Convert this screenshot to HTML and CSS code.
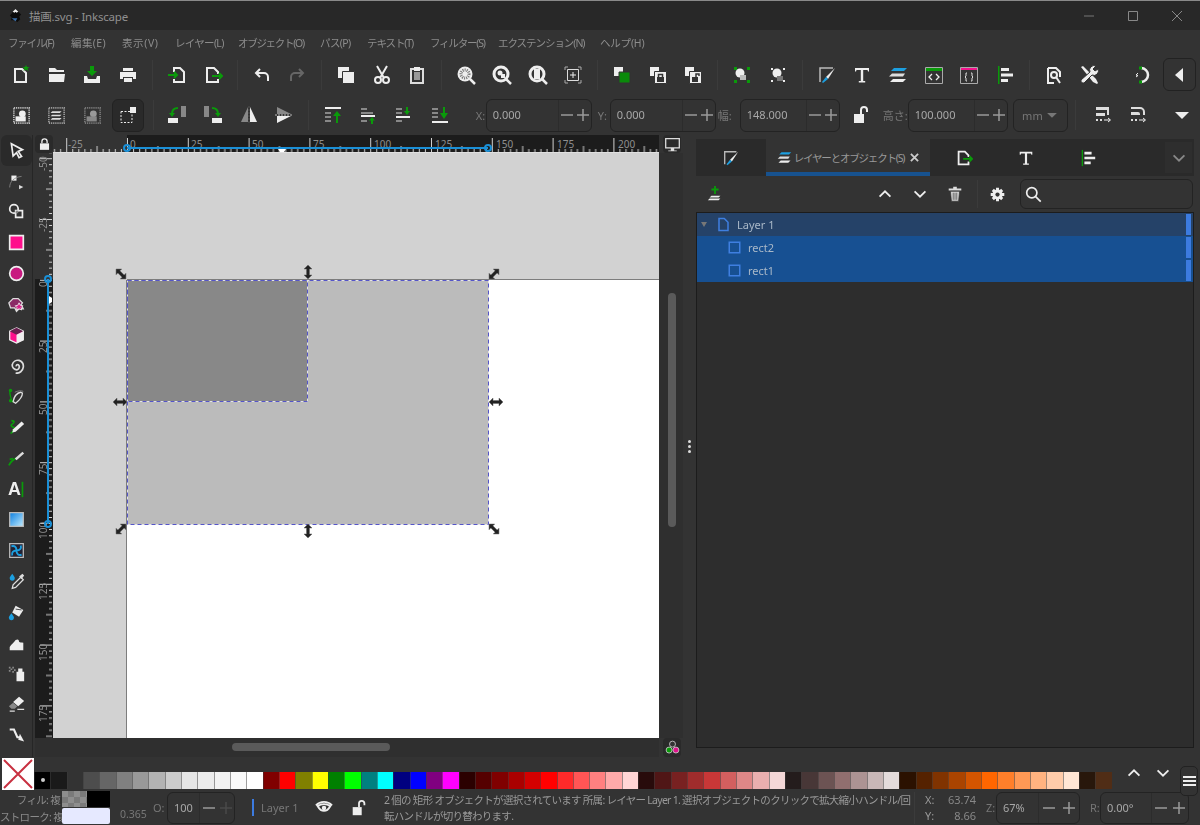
FILE: index.html
```html
<!DOCTYPE html>
<html lang="ja">
<head>
    <meta charset="UTF-8">
    <title>描画.svg - Inkscape</title>
    <link rel="stylesheet" href="styles.css">
</head>
<body>

<!-- icon set -->
<svg class="defs" width="0" height="0">
    <defs>
        <symbol id="i-new" viewBox="0 0 20 20"><path d="M4 4h7l4 4v9H4z" fill="none" stroke="#eee" stroke-width="2"/><path d="M15 0l1 2 2.500 0-2 1.500 1 2.500-2.500-1.500-2.500 1.500 1-2.500-2-1.500 2.500 0z" fill="#0a9a0a"/></symbol>
        <symbol id="i-open" viewBox="0 0 20 20"><path d="M2 3h6l2 2h7v2H5L2 7zM2 9h16l-1 8H2z" fill="#eee"/></symbol>
        <symbol id="i-save" viewBox="0 0 20 20"><path d="M8 1h4v5h3l-5 5-5-5h3z" fill="#0a9a0a"/><path d="M2 11h3l1 3h8l1-3h3v7H2z" fill="#eee"/></symbol>
        <symbol id="i-print" viewBox="0 0 20 20"><path d="M5 3h10v3H5zM2 7h16v7h-3v-2H5v2H2zM6 13h8v4H6z" fill="#eee"/></symbol>
        <symbol id="i-import" viewBox="0 0 20 20"><path d="M7 7V3h6l4 4v10H7v-3" fill="none" stroke="#eee" stroke-width="2"/><path d="M1 10h8M7 7l3 3-3 3" fill="none" stroke="#0a9a0a" stroke-width="2"/></symbol>
        <symbol id="i-export" viewBox="0 0 20 20"><path d="M15 9V7l-4-4H4v14h11v-3" fill="none" stroke="#eee" stroke-width="2"/><path d="M9 11h10M16 8l3 3-3 3" fill="none" stroke="#0a9a0a" stroke-width="2"/></symbol>
        <symbol id="i-undo" viewBox="0 0 20 20"><path d="M8 4L4 8l4 4M4 8h8a4 4 0 0 1 4 4v4" fill="none" stroke="currentColor" stroke-width="2"/></symbol>
        <symbol id="i-redo" viewBox="0 0 20 20"><path d="M12 4l4 4-4 4M16 8H8a4 4 0 0 0-4 4v4" fill="none" stroke="currentColor" stroke-width="2"/></symbol>
        <symbol id="i-copy" viewBox="0 0 20 20"><path d="M2 2h11v11H2z" fill="#eee"/><path d="M6.500 6.500h12v12h-12z" fill="#eee" stroke="#333"/></symbol>
        <symbol id="i-cut" viewBox="0 0 20 20"><path d="M5 1l7 12M15 1L8 13" stroke="#eee" stroke-width="2" fill="none"/><circle cx="6" cy="15" r="3" fill="none" stroke="#eee" stroke-width="2"/><circle cx="14" cy="15" r="3" fill="none" stroke="#eee" stroke-width="2"/></symbol>
        <symbol id="i-paste" viewBox="0 0 20 20"><path d="M4 4h12v14H4z" fill="none" stroke="#ddd" stroke-width="2"/><path d="M7 2h6v4H7z" fill="#eee"/><path d="M7 7h6v8H7z" fill="#999"/></symbol>
        <symbol id="i-zsel" viewBox="0 0 20 20"><circle cx="9" cy="9" r="7.500" fill="#eee"/><circle cx="9" cy="9" r="4" fill="none" stroke="#777" stroke-dasharray="1 1" stroke-width="3"/><path d="M14 14l5 5" stroke="#eee" stroke-width="2.500"/></symbol>
        <symbol id="i-zdraw" viewBox="0 0 20 20"><circle cx="9" cy="9" r="7" fill="none" stroke="#eee" stroke-width="3"/><circle cx="8" cy="8" r="2.500" fill="#eee"/><path d="M9 9h4v4H9z" fill="#eee"/><path d="M14 14l5 5" stroke="#eee" stroke-width="2.500"/></symbol>
        <symbol id="i-zpage" viewBox="0 0 20 20"><circle cx="9" cy="9" r="7" fill="none" stroke="#eee" stroke-width="3"/><path d="M6 4h6v10H6z" fill="#eee"/><path d="M14 14l5 5" stroke="#eee" stroke-width="2.500"/></symbol>
        <symbol id="i-zcenter" viewBox="0 0 20 20"><path d="M2 5V2h3M15 2h3v3M18 15v3h-3M5 18H2v-3" fill="none" stroke="#aaa"/><path d="M4.500 4.500h11v11h-11z" fill="none" stroke="#ddd"/><path d="M7 10h6M10 7v6" stroke="#eee"/></symbol>
        <symbol id="i-group" viewBox="0 0 20 20"><path d="M2 2h9v9H2z" fill="#eee"/><path d="M7 7h11v11H7z" fill="#0a8a0a" stroke="#333"/></symbol>
        <symbol id="i-lockgrp" viewBox="0 0 20 20"><path d="M2 2h9v9H2z" fill="#eee"/><path d="M6.500 6.500h12v12h-12z" fill="#eee" stroke="#333"/><path d="M9 12h7v5H9z" fill="#333"/><path d="M10.500 12V9.500h4V12" fill="none" stroke="#333" stroke-width="1.500"/></symbol>
        <symbol id="i-unlockgrp" viewBox="0 0 20 20"><path d="M2 2h9v9H2z" fill="#eee"/><path d="M6.500 6.500h12v12h-12z" fill="#eee" stroke="#333"/><path d="M9 12h6v5H9z" fill="#333"/><path d="M13 12V9h3v2" fill="none" stroke="#333" stroke-width="1.500"/></symbol>
        <symbol id="i-snapa" viewBox="0 0 20 20"><path d="M2 2h3v3H2zM15 2h3v3h-3zM2 15h3v3H2zM15 15h3v3h-3z" fill="#0a9a0a"/><circle cx="8" cy="8" r="4.500" fill="#eee"/><path d="M8 10h6v5H8z" fill="#bbb"/></symbol>
        <symbol id="i-snapb" viewBox="0 0 20 20"><path d="M3 3h2v2H3zM15 3h2v2h-2zM3 15h2v2H3zM15 15h2v2h-2z" fill="#eee"/><circle cx="9" cy="8" r="4.500" fill="#eee"/><path d="M9 11h6v5H9z" fill="#777"/></symbol>
        <symbol id="i-fill" viewBox="0 0 20 20"><path d="M3 17V3h13" fill="none" stroke="#bbb" stroke-width="1.500"/><path d="M18 3L9 12l2 2z" fill="#eee"/><path d="M9 12l2 2-5 4-1-1z" fill="#1c9fe0"/></symbol>
        <symbol id="i-text" viewBox="0 0 20 20"><path d="M3 3h14v3.500h-1l-.5-1.500H11.200v11h2V17.500H6.800V16h2V5H4.500L4 6.500H3z" fill="#eee"/></symbol>
        <symbol id="i-layers" viewBox="0 0 20 20"><path d="M6 3h13l-3 3H3z" fill="#1c9fe0"/><path d="M4 8.500h13l-2 3H1z" fill="#ddd"/><path d="M5 14h13l-3 3H2z" fill="#eee"/></symbol>
        <symbol id="i-xml" viewBox="0 0 20 20"><path d="M1.500 2.500h17v16h-17z" fill="#333" stroke="#aaa"/><path d="M2 3h16v3H2z" fill="#0a9a0a"/><path d="M8 9l-3 3 3 3M12 9l3 3-3 3" fill="none" stroke="#eee" stroke-width="1.300"/></symbol>
        <symbol id="i-css" viewBox="0 0 20 20"><path d="M1.500 2.500h17v16h-17z" fill="#333" stroke="#aaa"/><path d="M2 3h16v2H2z" fill="#f0148c"/><path d="M8 8H7v3l-1 1 1 1v3h1M12 8h1v3l1 1-1 1v3h-1" fill="none" stroke="#ddd"/></symbol>
        <symbol id="i-align" viewBox="0 0 20 20"><path d="M3 1h1.500v18H3z" fill="#0a9a0a"/><path d="M6 3h8v3H6zM6 8.500h12v3H6zM6 14h7v3H6z" fill="#eee"/></symbol>
        <symbol id="i-docprop" viewBox="0 0 20 20"><path d="M4 3h8l4 4v5M10 18H4V3" fill="none" stroke="#eee" stroke-width="2"/><circle cx="10" cy="10" r="3" fill="none" stroke="#eee" stroke-width="2"/><path d="M12 12l4 6" stroke="#eee" stroke-width="2"/></symbol>
        <symbol id="i-tools" viewBox="0 0 20 20"><path d="M2 2l2-1 13 13 2 4-1 1-4-2z" fill="#eee"/><path d="M17 1a4.500 4.500 0 0 0-6 6L2 15a2.500 2.500 0 0 0 3 3l8-8a4.500 4.500 0 0 0 6-6l-3 2-2-2z" fill="#eee" stroke="#333"/></symbol>
        <symbol id="i-sync" viewBox="0 0 20 20"><path d="M8 3a7 7 0 1 1 0 14" fill="none" stroke="#eee" stroke-width="2.500"/><path d="M6 1.500h3v3H6zM6 15.500h3v3H6z" fill="#0a9a0a"/><path d="M5 8L3 10l2 .5L3 12" fill="none" stroke="#eee"/></symbol>
        <symbol id="i-tri-l" viewBox="0 0 20 20"><path d="M14 3v14L6 10z" fill="#eee"/></symbol>
        <symbol id="i-selall" viewBox="0 0 20 20"><path d="M1 1h18v18H1z" fill="none" stroke="#bbb" stroke-width="2" stroke-dasharray="1.500 1"/><circle cx="11" cy="8" r="4" fill="#eee"/><path d="M3 11h12v6H3z" fill="#eee"/></symbol>
        <symbol id="i-selstack" viewBox="0 0 20 20"><path d="M1 1h18v18H1z" fill="none" stroke="#999" stroke-width="2" stroke-dasharray="1.500 1"/><path d="M5 5h11l-2 2H3zM5 9h11l-2 2H3zM5 13h11l-2 2H3z" fill="#ddd"/></symbol>
        <symbol id="i-seldim" viewBox="0 0 20 20"><path d="M1 1h18v18H1z" fill="none" stroke="#777" stroke-width="2" stroke-dasharray="1.500 1"/><circle cx="11" cy="8" r="4" fill="#999"/><path d="M3 11h12v6H3z" fill="#888"/></symbol>
        <symbol id="i-selbox" viewBox="0 0 20 20"><path d="M3 6.500h11v11H3z" fill="none" stroke="#eee" stroke-dasharray="2 1.500"/><path d="M12 2h6v6h-6z" fill="#eee"/></symbol>
        <symbol id="i-rotl" viewBox="0 0 20 20"><path d="M14 1h5v11h-5z" fill="#888"/><path d="M1 13h10v5H1z" fill="#eee"/><path d="M11 3C7 3 5 5 5 9" fill="none" stroke="#0a9a0a" stroke-width="2"/><path d="M2 8h6l-3 4z" fill="#0a9a0a"/></symbol>
        <symbol id="i-rotr" viewBox="0 0 20 20"><path d="M1 1h5v11H1z" fill="#888"/><path d="M9 13h10v5H9z" fill="#eee"/><path d="M9 3c4 0 6 2 6 6" fill="none" stroke="#0a9a0a" stroke-width="2"/><path d="M12 8h6l-3 4z" fill="#0a9a0a"/></symbol>
        <symbol id="i-fliph" viewBox="0 0 20 20"><path d="M9 2v15H2z" fill="#888"/><path d="M11 2v15h7z" fill="#eee"/><path d="M10 1v18" stroke="#555" stroke-dasharray="2 1"/></symbol>
        <symbol id="i-flipv" viewBox="0 0 20 20"><path d="M3 2l14 7H3z" fill="#888"/><path d="M3 11h14L3 18z" fill="#eee"/><path d="M1 10h18" stroke="#bbb" stroke-dasharray="2 1"/></symbol>
        <symbol id="i-top" viewBox="0 0 20 20"><path d="M2 2h16v2H2z" fill="#eee"/><path d="M2 7h6v2H2zM2 11h6v2H2zM2 15h6v2H2z" fill="#888"/><path d="M14 6l4 5h-3v7h-2v-7h-3z" fill="#0a9a0a"/></symbol>
        <symbol id="i-up" viewBox="0 0 20 20"><path d="M2 3h6v2H2zM2 7h12v2H2z" fill="#888"/><path d="M2 10h14v2H2z" fill="#eee"/><path d="M2 15h6v2H2z" fill="#888"/><path d="M13 12l3 3.500h-2V19h-2v-3.500h-2z" fill="#0a9a0a"/></symbol>
        <symbol id="i-down" viewBox="0 0 20 20"><path d="M2 3h6v2H2zM2 7h6v2H2z" fill="#888"/><path d="M2 11h14v2H2z" fill="#eee"/><path d="M2 15h6v2H2z" fill="#888"/><path d="M12 2h2v4h2l-3 4-3-4h2z" fill="#0a9a0a"/></symbol>
        <symbol id="i-bottom" viewBox="0 0 20 20"><path d="M2 3h6v2H2zM2 7h6v2H2zM2 11h6v2H2z" fill="#888"/><path d="M2 16h16v2H2z" fill="#eee"/><path d="M13 2h2v6h3l-4 6-4-6h3z" fill="#0a9a0a"/></symbol>
        <symbol id="i-minus" viewBox="0 0 14 14"><path d="M1 6.250h12v1.500H1z" fill="currentColor"/></symbol>
        <symbol id="i-plus" viewBox="0 0 14 14"><path d="M1 6.250h12v1.500H1zM6.250 1h1.500v12h-1.500z" fill="currentColor"/></symbol>
        <symbol id="i-lock-open" viewBox="0 0 20 20"><path d="M3 9h10v9H3z" fill="#eee"/><path d="M10 9V5a3 3 0 0 1 6 0v2" fill="none" stroke="#eee" stroke-width="2"/></symbol>
        <symbol id="i-lock" viewBox="0 0 20 20"><path d="M3 9h14v10H3z" fill="#eee"/><path d="M6 9V6a4 4 0 0 1 8 0v3" fill="none" stroke="#eee" stroke-width="2"/></symbol>
        <symbol id="i-opta" viewBox="0 0 20 20"><path d="M2 2h13v3H2z" fill="#ddd" stroke="none"/><path d="M13 5h2v5h-2M2 8h9v3H2zM2 14h2v2H2zM6 14h2v2H6z" fill="#ddd"/><path d="M10 15h6M14 13l2.500 2-2.500 2" fill="none" stroke="#eee"/></symbol>
        <symbol id="i-optb" viewBox="0 0 20 20"><path d="M2 2h9a5 5 0 0 1 5 5v3h-2V7a3 3 0 0 0-3-3H2zM2 7h7a2 2 0 0 1 2 2v1H2z" fill="#ddd"/><path d="M2 14h2v2H2zM6 14h2v2H6z" fill="#ddd"/><path d="M10 15h6M14 13l2.500 2-2.500 2" fill="none" stroke="#eee"/></symbol>
        <symbol id="i-tri-d" viewBox="0 0 20 20"><path d="M3 7h14l-7 7z" fill="currentColor"/></symbol>

        <symbol id="t-select" viewBox="0 0 20 20"><path d="M4 2l13 7-5 2 4 6-3 1.500-3-6-4 4z" fill="none" stroke="#eee" stroke-width="2"/></symbol>
        <symbol id="t-node" viewBox="0 0 20 20"><path d="M4 3h6v6H4z" fill="#eee"/><path d="M2 17c0-7 5-12 14-13" fill="none" stroke="#888"/><path d="M13 14l5 2.500-5 2.500z" fill="#ddd"/></symbol>
        <symbol id="t-builder" viewBox="0 0 20 20"><circle cx="7" cy="7" r="5" fill="none" stroke="#eee" stroke-width="2"/><path d="M9 9h8v8H9z" fill="none" stroke="#eee" stroke-width="2"/><path d="M9 9h3v3H9z" fill="#888"/></symbol>
        <symbol id="t-rect" viewBox="0 0 20 20"><path d="M2 2h16v16H2z" fill="#ff0f8c" stroke="#eee" stroke-width="2"/></symbol>
        <symbol id="t-ellipse" viewBox="0 0 20 20"><circle cx="10" cy="10" r="8" fill="#c81a80" stroke="#eee" stroke-width="2"/></symbol>
        <symbol id="t-star" viewBox="0 0 20 20"><path d="M6 3h6l5 5-1.500 2L18 15l-5 0-3 3-2-4H3L1 8z" fill="#8a2a66" stroke="#ddd" stroke-width="1.500"/><path d="M13 8l1.500 3 3 .5-2 2 .5 3-3-1.500-3 1.500.5-3-2-2 3-.5z" fill="#d81f88" stroke="#eee"/></symbol>
        <symbol id="t-box" viewBox="0 0 20 20"><path d="M10 1l8 4v10l-8 4-8-4V5z" fill="#ff0f8c" stroke="#eee" stroke-width="1.500"/><path d="M2 5l8 4 8-4-8-4z" fill="#6a2050"/><path d="M10 9v10l8-4V5z" fill="#eee"/></symbol>
        <symbol id="t-spiral" viewBox="0 0 20 20"><path d="M10 11a1.500 1.500 0 0 1 2-2 3.500 3.500 0 0 1-1 6 5.500 5.500 0 0 1-6-6 7 7 0 0 1 8-5 7.500 7.500 0 0 1 5 8 8 8 0 0 1-9 7" fill="none" stroke="#ddd" stroke-width="2"/></symbol>
        <symbol id="t-pen" viewBox="0 0 20 20"><path d="M2 2c0 6 2 12 4 15" fill="none" stroke="#0a9a0a" stroke-width="1.500"/><circle cx="3" cy="3" r="2" fill="#0a9a0a"/><circle cx="3" cy="15" r="2" fill="#0a9a0a"/><path d="M17 6c0 4-3 8-8 12l-3-2c1-5 4-10 9-11z" fill="none" stroke="#ddd" stroke-width="1.500"/><path d="M8 5c4-2 8-2 10-1" fill="none" stroke="#888"/></symbol>
        <symbol id="t-pencil" viewBox="0 0 20 20"><path d="M4 2c4 0 4 2 1 4s0 3 2 4-2 6-4 7" fill="none" stroke="#0a9a0a" stroke-width="2"/><path d="M16 3l3 3-10 9-4 1 1-4z" fill="#eee"/></symbol>
        <symbol id="t-calli" viewBox="0 0 20 20"><path d="M1 18C3 14 6 11 11 9" fill="none" stroke="#0a9a0a" stroke-width="2"/><path d="M2 11l4-1" stroke="#0a9a0a" stroke-width="2"/><path d="M17 2l2 2-9 8-2-2z" fill="#ddd"/></symbol>
        <symbol id="t-a" viewBox="0 0 20 20"><text class="glyph" x="0" y="16">A</text><path d="M16 1h2v18h-2z" fill="#0a9a0a"/></symbol>
        <linearGradient id="g-blue" x1="0" y1="0" x2="1" y2="1"><stop offset="0" stop-color="#0c7fe0"/><stop offset="1" stop-color="#c0ecff"/></linearGradient>
        <symbol id="t-grad" viewBox="0 0 20 20"><path d="M2 2h16v16H2z" fill="url(#g-blue)" stroke="#bbb" stroke-width="1.500"/></symbol>
        <symbol id="t-mesh" viewBox="0 0 20 20"><path d="M2 2h16v16H2z" fill="#223" stroke="#bbb" stroke-width="1.500"/><path d="M10 10C10 6 8 4 4 5M10 10c4 0 6-2 5-6M10 10c0 4 2 6 6 5M10 10c-4 0-6 2-5 6" fill="none" stroke="#1c9fe0" stroke-width="2.200"/></symbol>
        <symbol id="t-dropper" viewBox="0 0 20 20"><path d="M5 1c2 3 3 4 3 5a3 3 0 0 1-6 0c0-1 1-2 3-5z" fill="#1c9fe0"/><path d="M15 5l-9 9-1 4 4-1 9-9z" fill="#333" stroke="#ddd" stroke-width="1.500"/><path d="M13 4l4-3 2 2-3 4z" fill="#ddd"/></symbol>
        <symbol id="t-bucket" viewBox="0 0 20 20"><path d="M9 2l9 5-5 8-8-5z" fill="#eee"/><path d="M9 6l7 1" stroke="#333"/><path d="M4 11c2 3 3 4 3 5a3 3 0 0 1-6 0c0-1 1-2 3-5z" fill="#1c9fe0"/></symbol>
        <symbol id="t-tweak" viewBox="0 0 20 20"><path d="M2 18v-4c2-3 5-5 7-8 3-2 4 0 4 2 1 1 3 1 5 1v9z" fill="#eee"/></symbol>
        <symbol id="t-spray" viewBox="0 0 20 20"><path d="M10 8h9v11H10zM12 4h5v4h-5z" fill="#eee"/><path d="M1 2h2v2H1zM5 2h2v2H5zM3 4h2v2H3zM7 5h2v2H7zM1 6h2v2H1zM5 7h2v2H5z" fill="#888"/></symbol>
        <symbol id="t-eraser" viewBox="0 0 20 20"><path d="M13 1l6 5-7 6-6-5z" fill="#eee"/><path d="M6 8l5 4-3 3H4l-3-3z" fill="#888"/><path d="M11 15h8v1.500h-8zM2 17h6v1.500H2z" fill="#ddd"/></symbol>
        <symbol id="t-conn" viewBox="0 0 20 20"><path d="M2 3h5l4 9h4" fill="none" stroke="#eee" stroke-width="2.500"/><path d="M14 8l5 9-7-2z" fill="#eee"/></symbol>

        <symbol id="d-display" viewBox="0 0 20 20"><path d="M2 3h16v11H2z" fill="none" stroke="#ddd" stroke-width="1.500"/><path d="M8 14h4v3H8zM5 17h10v1H5z" fill="#ddd"/></symbol>
        <symbol id="d-color" viewBox="0 0 20 20"><circle cx="10" cy="6" r="3.500" fill="#333" stroke="#ccc"/><circle cx="6" cy="13" r="3.500" fill="#0a9a0a" stroke="#ccc"/><circle cx="14" cy="13" r="3.500" fill="#e0148c" stroke="#ccc"/></symbol>
        <symbol id="d-addlayer" viewBox="0 0 20 20"><path d="M9 1h2v3h3v2h-3v4H9V6H6V4h3z" fill="#0a9a0a"/><path d="M6 12h10l-2 2H4zM4 15h12l-2 2H2z" fill="#eee"/></symbol>
        <symbol id="d-up" viewBox="0 0 20 20"><path d="M4 13l6-6 6 6" fill="none" stroke="#eee" stroke-width="2"/></symbol>
        <symbol id="d-down" viewBox="0 0 20 20"><path d="M4 7l6 6 6-6" fill="none" stroke="currentColor" stroke-width="2"/></symbol>
        <symbol id="d-trash" viewBox="0 0 20 20"><path d="M3 4h14v2H3zM8 2h4v2H8z" fill="#ddd"/><path d="M5 7h10l-1 11H6zM8 8.500v8M10 8.500v8M12 8.500v8" fill="#ddd" stroke="#333" stroke-width=".8"/></symbol>
        <symbol id="d-gear" viewBox="0 0 20 20"><path d="M10 2v16M2 10h16M4.500 4.500l11 11M15.500 4.500l-11 11" stroke="#eee" stroke-width="3.500"/><circle cx="10" cy="10" r="6" fill="#eee"/><circle cx="10" cy="10" r="2.500" fill="#333"/></symbol>
        <symbol id="d-search" viewBox="0 0 20 20"><circle cx="8" cy="8" r="6" fill="none" stroke="#eee" stroke-width="2"/><path d="M12.500 12.500l6 6" stroke="#eee" stroke-width="2"/></symbol>
        <symbol id="d-layer" viewBox="0 0 20 20"><path d="M4 2h7l5 5v11H4z" fill="none" stroke="#3f7fe0" stroke-width="2"/></symbol>
        <symbol id="d-rect" viewBox="0 0 20 20"><path d="M3 3h14v14H3z" fill="none" stroke="#3f7fe0" stroke-width="2"/></symbol>
        <symbol id="d-eye" viewBox="0 0 20 20"><path d="M1 7c5-5 13-5 18 0M3 8c4 7 10 7 14 0-4-3-10-3-14 0z" fill="none" stroke="#eee" stroke-width="2"/><circle cx="10" cy="10" r="2.500" fill="#eee"/></symbol>
    </defs>
</svg>

<div class="window">

    <!-- title bar -->
    <div class="titlebar">
        <svg class="logo" viewBox="0 0 16 16"><path d="M8 1l6 6-2 2 1 3-3 3-3-2-4 0 1-3-2-2z" fill="#0b0b0b"/><path d="M8 1L5 4l2 1 1-1 1 1 2-1z" fill="#eee"/><path d="M4 11h6l-2 3z" fill="#3a6ea8"/></svg>
        <span class="title-text">描画.svg - Inkscape</span>
        <div class="winctl">
            <svg viewBox="0 0 12 12"><path d="M1 6h10" stroke="#777"/></svg>
            <svg viewBox="0 0 12 12"><path d="M1.500 1.500h9v9h-9z" fill="none" stroke="#888"/></svg>
            <svg viewBox="0 0 12 12"><path d="M1 1l10 10M11 1L1 11" stroke="#888"/></svg>
        </div>
    </div>

    <!-- menu bar -->
    <div class="menubar">
        <span class="m1">ファイル(F)</span>
        <span class="m2">編集(E)</span>
        <span class="m3">表示(V)</span>
        <span class="m4">レイヤー(L)</span>
        <span class="m5">オブジェクト(O)</span>
        <span class="m6">パス(P)</span>
        <span class="m7">テキスト(T)</span>
        <span class="m8">フィルター(S)</span>
        <span class="m9">エクステンション(N)</span>
        <span class="m10">ヘルプ(H)</span>
    </div>

    <!-- command bar -->
    <div class="toolbar top">
        <svg class="ic"><use href="#i-new"/></svg>
        <svg class="ic"><use href="#i-open"/></svg>
        <svg class="ic"><use href="#i-save"/></svg>
        <svg class="ic"><use href="#i-print"/></svg>
        <i class="sep"></i>
        <svg class="ic"><use href="#i-import"/></svg>
        <svg class="ic"><use href="#i-export"/></svg>
        <i class="sep"></i>
        <svg class="ic lit"><use href="#i-undo"/></svg>
        <svg class="ic dim"><use href="#i-redo"/></svg>
        <i class="sep"></i>
        <svg class="ic"><use href="#i-copy"/></svg>
        <svg class="ic"><use href="#i-cut"/></svg>
        <svg class="ic"><use href="#i-paste"/></svg>
        <i class="sep"></i>
        <svg class="ic"><use href="#i-zsel"/></svg>
        <svg class="ic"><use href="#i-zdraw"/></svg>
        <svg class="ic"><use href="#i-zpage"/></svg>
        <svg class="ic"><use href="#i-zcenter"/></svg>
        <i class="sep"></i>
        <svg class="ic"><use href="#i-group"/></svg>
        <svg class="ic"><use href="#i-lockgrp"/></svg>
        <svg class="ic"><use href="#i-unlockgrp"/></svg>
        <i class="sep"></i>
        <svg class="ic"><use href="#i-snapa"/></svg>
        <svg class="ic"><use href="#i-snapb"/></svg>
        <i class="sep"></i>
        <svg class="ic"><use href="#i-fill"/></svg>
        <svg class="ic"><use href="#i-text"/></svg>
        <svg class="ic"><use href="#i-layers"/></svg>
        <svg class="ic"><use href="#i-xml"/></svg>
        <svg class="ic"><use href="#i-css"/></svg>
        <svg class="ic"><use href="#i-align"/></svg>
        <i class="sep"></i>
        <svg class="ic"><use href="#i-docprop"/></svg>
        <svg class="ic"><use href="#i-tools"/></svg>
        <svg class="ic sync"><use href="#i-sync"/></svg>
        <span class="more-btn"><svg class="ic-sm"><use href="#i-tri-l"/></svg></span>
    </div>

    <!-- tool controls -->
    <div class="toolbar controls">
        <svg class="ic small"><use href="#i-selall"/></svg>
        <svg class="ic small"><use href="#i-selstack"/></svg>
        <svg class="ic small"><use href="#i-seldim"/></svg>
        <span class="active-btn"><svg class="ic-sm"><use href="#i-selbox"/></svg></span>
        <i class="sep"></i>
        <svg class="ic"><use href="#i-rotl"/></svg>
        <svg class="ic"><use href="#i-rotr"/></svg>
        <svg class="ic"><use href="#i-fliph"/></svg>
        <svg class="ic"><use href="#i-flipv"/></svg>
        <i class="sep"></i>
        <svg class="ic"><use href="#i-top"/></svg>
        <svg class="ic"><use href="#i-up"/></svg>
        <svg class="ic"><use href="#i-down"/></svg>
        <svg class="ic"><use href="#i-bottom"/></svg>
        <span class="lbl lbl-x">X:</span>
        <div class="spin w106"><span class="val">0.000</span><span class="btn"><svg><use href="#i-minus"/></svg></span><span class="btn"><svg><use href="#i-plus"/></svg></span></div>
        <span class="lbl lbl-y">Y:</span>
        <div class="spin w106"><span class="val">0.000</span><span class="btn"><svg><use href="#i-minus"/></svg></span><span class="btn"><svg><use href="#i-plus"/></svg></span></div>
        <span class="lbl lbl-w">幅:</span>
        <div class="spin w100"><span class="val">148.000</span><span class="btn"><svg><use href="#i-minus"/></svg></span><span class="btn"><svg><use href="#i-plus"/></svg></span></div>
        <svg class="ic-lock"><use href="#i-lock-open"/></svg>
        <span class="lbl lbl-h">高さ:</span>
        <div class="spin w100"><span class="val">100.000</span><span class="btn"><svg><use href="#i-minus"/></svg></span><span class="btn"><svg><use href="#i-plus"/></svg></span></div>
        <div class="unit">mm<svg><use href="#i-tri-d"/></svg></div>
        <i class="sep sep-unit"></i>
        <svg class="ic"><use href="#i-opta"/></svg>
        <svg class="ic"><use href="#i-optb"/></svg>
        <svg class="ic lit drop"><use href="#i-tri-d"/></svg>
    </div>

    <div class="main">

        <!-- toolbox -->
        <div class="toolbox">
            <span class="tool active"><svg><use href="#t-select"/></svg></span>
            <span class="tool"><svg><use href="#t-node"/></svg></span>
            <span class="tool"><svg><use href="#t-builder"/></svg></span>
            <span class="tool"><svg><use href="#t-rect"/></svg></span>
            <span class="tool"><svg><use href="#t-ellipse"/></svg></span>
            <span class="tool"><svg><use href="#t-star"/></svg></span>
            <span class="tool"><svg><use href="#t-box"/></svg></span>
            <span class="tool"><svg><use href="#t-spiral"/></svg></span>
            <span class="tool"><svg><use href="#t-pen"/></svg></span>
            <span class="tool"><svg><use href="#t-pencil"/></svg></span>
            <span class="tool"><svg><use href="#t-calli"/></svg></span>
            <span class="tool"><svg><use href="#t-a"/></svg></span>
            <span class="tool"><svg><use href="#t-grad"/></svg></span>
            <span class="tool"><svg><use href="#t-mesh"/></svg></span>
            <span class="tool"><svg><use href="#t-dropper"/></svg></span>
            <span class="tool"><svg><use href="#t-bucket"/></svg></span>
            <span class="tool"><svg><use href="#t-tweak"/></svg></span>
            <span class="tool"><svg><use href="#t-spray"/></svg></span>
            <span class="tool"><svg><use href="#t-eraser"/></svg></span>
            <span class="tool"><svg><use href="#t-conn"/></svg></span>
        </div>

        <!-- canvas with rulers -->
        <div class="workspace">
            <span class="corner"><svg><use href="#i-lock"/></svg></span>
            <svg class="ruler-top" width="606" height="18">
                <defs>
                    <pattern id="ticks-h" patternUnits="userSpaceOnUse" x="74" y="0" width="60.800" height="18">
                        <path d="M0.500 3v14M6.580 14v3M12.660 14v3M18.740 14v3M24.820 14v3M30.900 11v6M36.980 14v3M43.060 14v3M49.140 14v3M55.220 14v3" stroke="#d0d0d0"/>
                    </pattern>
                </defs>
                <rect width="74" height="18" fill="#333"/>
                <rect x="74" width="532" height="18" fill="#1c1c1c"/>
                <rect width="606" height="18" fill="url(#ticks-h)"/>
                <rect y="17" width="606" height="1" fill="#e0e0e0"/>
                <text x="15" y="13">-25</text><text x="77" y="13">0</text><text x="138" y="13">25</text><text x="199" y="13">50</text><text x="260" y="13">75</text><text x="321" y="13">100</text><text x="382" y="13">125</text><text x="443" y="13">150</text><text x="504" y="13">175</text><text x="565" y="13">200</text>
                <path d="M74 13h361" stroke="#1a8fd6" stroke-width="2"/>
                <circle cx="74" cy="13" r="3" fill="none" stroke="#1a8fd6" stroke-width="2"/>
                <circle cx="435" cy="13" r="3" fill="none" stroke="#1a8fd6" stroke-width="2"/>
                <path d="M225 14h8l-2 3h-4z" fill="#fff"/>
            </svg>
            <span class="display-btn"><svg><use href="#d-display"/></svg></span>

            <svg class="ruler-left" width="18" height="585">
                <defs>
                    <pattern id="ticks-v" patternUnits="userSpaceOnUse" x="0" y="5.200" width="18" height="60.800">
                        <path d="M5 0.500h12M14 6.580h3M14 12.660h3M14 18.740h3M14 24.820h3M11 30.900h6M14 36.980h3M14 43.060h3M14 49.140h3M14 55.220h3" stroke="#d0d0d0"/>
                    </pattern>
                </defs>
                <rect width="18" height="126" fill="#333"/>
                <rect y="126" width="18" height="459" fill="#1c1c1c"/>
                <rect width="18" height="585" fill="url(#ticks-v)"/>
                <text transform="translate(12 18) rotate(-90)">-50</text><text transform="translate(12 79) rotate(-90)">-25</text><text transform="translate(12 134) rotate(-90)">0</text><text transform="translate(12 200) rotate(-90)">25</text><text transform="translate(12 262) rotate(-90)">50</text><text transform="translate(12 322) rotate(-90)">75</text><text transform="translate(12 386) rotate(-90)">100</text><text transform="translate(12 447) rotate(-90)">125</text><text transform="translate(12 508) rotate(-90)">150</text><text transform="translate(12 569) rotate(-90)">175</text>
                <path d="M13 126v245" stroke="#1a8fd6" stroke-width="2"/>
                <circle cx="13" cy="126" r="3" fill="none" stroke="#1a8fd6" stroke-width="2"/>
                <circle cx="13" cy="371" r="3" fill="none" stroke="#1a8fd6" stroke-width="2"/>
                <path d="M14 143v8l3-2v-4z" fill="#fff"/>
            </svg>

            <svg class="canvas" width="606" height="585">
                <defs>
                    <path id="h-arrow" d="M-7 0l4-4v2.500h6V-4l4 4-4 4V1.500H-3V4z" fill="#222" stroke="#666" stroke-width=".5"/>
                </defs>
                <rect width="606" height="585" fill="#d2d2d2"/>
                <rect x="74" y="127" width="532" height="458" fill="#fff"/>
                <path d="M73.500 127v458M74 126.500h532" stroke="#7d7d7d"/>
                <rect x="74" y="127" width="361" height="244" fill="#bbb"/>
                <rect x="74" y="127" width="180" height="121" fill="#888"/>
                <g fill="none">
                    <rect x="74.500" y="127.500" width="361" height="244" stroke="#e4e4e4"/>
                    <rect x="74.500" y="127.500" width="180" height="121" stroke="#e4e4e4"/>
                    <rect x="74.500" y="127.500" width="361" height="244" stroke="#5555c8" stroke-dasharray="4 3"/>
                    <rect x="74.500" y="127.500" width="180" height="121" stroke="#5555c8" stroke-dasharray="4 3"/>
                </g>
                <use href="#h-arrow" transform="translate(68 121) rotate(45)"/>
                <use href="#h-arrow" transform="translate(255 119) rotate(90)"/>
                <use href="#h-arrow" transform="translate(441 121) rotate(-45)"/>
                <use href="#h-arrow" transform="translate(67 249)"/>
                <use href="#h-arrow" transform="translate(443 249)"/>
                <use href="#h-arrow" transform="translate(68 376) rotate(-45)"/>
                <use href="#h-arrow" transform="translate(255 378) rotate(90)"/>
                <use href="#h-arrow" transform="translate(441 376) rotate(45)"/>
            </svg>
            <div class="vscroll"><span class="thumb-v"></span></div>

            <div class="hscroll"><span class="thumb-h"></span></div>
            <span class="color-btn"><svg><use href="#d-color"/></svg></span>
        </div>

        <div class="handle"><i></i><i></i><i></i></div>

        <!-- docked dialogs -->
        <div class="dock">
            <div class="tabs">
                <span class="tab t-fill"><svg class="ic-tab"><use href="#i-fill"/></svg></span>
                <span class="tab active"><svg class="ic-tab"><use href="#i-layers"/></svg><span class="tab-label">レイヤーとオブジェクト(S)</span><svg class="tab-x" viewBox="0 0 10 10"><path d="M1 1l8 8M9 1L1 9" stroke="#ccc" stroke-width="2"/></svg></span>
                <span class="tab t-rest"><svg class="ic-tab"><use href="#i-export"/></svg></span>
                <span class="tab t-rest"><svg class="ic-tab"><use href="#i-text"/></svg></span>
                <span class="tab t-rest"><svg class="ic-tab"><use href="#i-align"/></svg></span>
                <span class="tab-menu"><svg><use href="#d-down"/></svg></span>
            </div>
            <div class="dock-bar">
                <svg class="add-layer"><use href="#d-addlayer"/></svg>
                <svg class="db-ic"><use href="#d-up"/></svg>
                <svg class="db-ic"><use href="#d-down"/></svg>
                <svg class="db-ic"><use href="#d-trash"/></svg>
                <i class="sep"></i>
                <svg class="db-ic gear"><use href="#d-gear"/></svg>
                <div class="search"><svg><use href="#d-search"/></svg></div>
            </div>
            <div class="tree">
                <div class="row layer"><i class="expander"></i><svg class="row-ic"><use href="#d-layer"/></svg><span>Layer 1</span><b></b></div>
                <div class="row child"><svg class="row-ic"><use href="#d-rect"/></svg><span>rect2</span><b></b></div>
                <div class="row child"><svg class="row-ic"><use href="#d-rect"/></svg><span>rect1</span><b></b></div>
            </div>
        </div>
    </div>

    <!-- palette -->
    <div class="palette">
        <svg class="nofill" viewBox="0 0 32 32"><rect width="32" height="32" fill="#fff"/><path d="M2 2l28 28M30 2L2 30" stroke="#c83040" stroke-width="2"/></svg>
        <div class="swatches">
            <span class="sw dot" style="background:#000"></span><span class="sw" style="background:#1a1a1a"></span><span class="sw" style="background:#333"></span><span class="sw" style="background:#4d4d4d"></span><span class="sw" style="background:#666"></span><span class="sw" style="background:#808080"></span><span class="sw" style="background:#999"></span><span class="sw" style="background:#b3b3b3"></span><span class="sw" style="background:#ccc"></span><span class="sw" style="background:#e6e6e6"></span><span class="sw" style="background:#ececec"></span><span class="sw" style="background:#f2f2f2"></span><span class="sw" style="background:#f9f9f9"></span><span class="sw" style="background:#fff"></span>
            <span class="sw" style="background:#800000"></span><span class="sw" style="background:#f00"></span><span class="sw" style="background:#808000"></span><span class="sw" style="background:#ff0"></span><span class="sw" style="background:#008000"></span><span class="sw" style="background:#0f0"></span><span class="sw" style="background:#008080"></span><span class="sw" style="background:#0ff"></span><span class="sw" style="background:#000080"></span><span class="sw" style="background:#00f"></span><span class="sw" style="background:#800080"></span><span class="sw" style="background:#f0f"></span>
            <span class="sw" style="background:#2b0000"></span><span class="sw" style="background:#500"></span><span class="sw" style="background:#800000"></span><span class="sw" style="background:#a00"></span><span class="sw" style="background:#d40000"></span><span class="sw" style="background:#f00"></span><span class="sw" style="background:#ff2a2a"></span><span class="sw" style="background:#f55"></span><span class="sw" style="background:#ff8080"></span><span class="sw" style="background:#faa"></span><span class="sw" style="background:#ffd5d5"></span>
            <span class="sw" style="background:#280b0b"></span><span class="sw" style="background:#501616"></span><span class="sw" style="background:#782121"></span><span class="sw" style="background:#a02c2c"></span><span class="sw" style="background:#c83737"></span><span class="sw" style="background:#d35f5f"></span><span class="sw" style="background:#de8787"></span><span class="sw" style="background:#e9afaf"></span><span class="sw" style="background:#f4d7d7"></span>
            <span class="sw" style="background:#241c1c"></span><span class="sw" style="background:#483737"></span><span class="sw" style="background:#6c5353"></span><span class="sw" style="background:#916f6f"></span><span class="sw" style="background:#ac9393"></span><span class="sw" style="background:#c8b7b7"></span><span class="sw" style="background:#e3dbdb"></span>
            <span class="sw" style="background:#2b1100"></span><span class="sw" style="background:#520"></span><span class="sw" style="background:#803300"></span><span class="sw" style="background:#a40"></span><span class="sw" style="background:#d45500"></span><span class="sw" style="background:#f60"></span><span class="sw" style="background:#ff7f2a"></span><span class="sw" style="background:#f95"></span><span class="sw" style="background:#ffb380"></span><span class="sw" style="background:#fca"></span><span class="sw" style="background:#ffe6d5"></span>
            <span class="sw" style="background:#28170b"></span><span class="sw" style="background:#502d16"></span>
        </div>
        <svg class="pal-ch up"><use href="#d-up"/></svg>
        <svg class="pal-ch lit"><use href="#d-down"/></svg>
        <span class="pal-menu"><i></i><i></i><i></i></span>
    </div>

    <!-- status bar -->
    <div class="statusbar">
        <div class="fs">
            <span class="fs-label">フィル: 複</span><span class="fs-fill"><i class="checker"></i><i class="black"></i></span>
            <span class="fs-label">ストローク: 複</span><span class="fs-stroke"></span>
        </div>
        <span class="stroke-w">0.365</span>
        <span class="lbl lbl-o">O:</span>
        <div class="spin w68"><span class="val">100</span><span class="btn"><svg><use href="#i-minus"/></svg></span><span class="btn off"><svg><use href="#i-plus"/></svg></span></div>
        <i class="layer-bar"></i>
        <span class="layer-name">Layer 1</span>
        <svg class="st-eye"><use href="#d-eye"/></svg>
        <svg class="st-lock"><use href="#i-lock-open"/></svg>
        <p class="msg">2 個の 矩形 オブジェクトが選択されています 所属: レイヤー Layer 1. 選択オブジェクトのクリックで拡大縮小ハンドル/回<br>転ハンドルが切り替わります.</p>
        <div class="coords"><span>X:</span><span class="num">63.74</span><span>Y:</span><span class="num">8.66</span></div>
        <span class="lbl lbl-z">Z:</span>
        <div class="spin w84"><span class="val">67%</span><span class="btn"><svg><use href="#i-minus"/></svg></span><span class="btn"><svg><use href="#i-plus"/></svg></span></div>
        <span class="lbl lbl-r">R:</span>
        <div class="spin w90"><span class="val">0.00°</span><span class="btn"><svg><use href="#i-minus"/></svg></span><span class="btn"><svg><use href="#i-plus"/></svg></span></div>
    </div>
</div>

</body>
</html>
```

FILE: styles.css
```css
* {
    box-sizing: border-box;
}
html, body {
    margin: 0;
    padding: 0;
    width: 1200px;
    height: 825px;
    overflow: hidden;
    background-color: #333;
}
body {
    font-family: "Noto Sans", "Noto Sans CJK JP", sans-serif;
    font-size: 11px;
    color: #a0a0a0;
}
svg {
    display: block;
    flex-shrink: 0;
}
.defs {
    position: absolute;
}
.glyph {
    font-family: "Liberation Sans", sans-serif;
    font-size: 21px;
    font-weight: bold;
    fill: #eee;
}
.window {
    width: 1200px;
    height: 825px;
    display: flex;
    flex-direction: column;
    filter: blur(0.35px);
}

/* title + menu */
.titlebar {
    height: 30px;
    display: flex;
    align-items: center;
    padding-left: 8px;
    background-color: #282828;
    border-top: 1px solid #8a8a8a;
    font-size: 11.5px;
}
.logo {
    width: 15px;
    height: 15px;
}
.title-text {
    margin-left: 6px;
    color: #909090;
    letter-spacing: -0.2px;
}
.winctl {
    margin-left: auto;
    display: flex;
    padding-right: 17px;
    gap: 32px;
}
.winctl svg {
    width: 12px;
    height: 12px;
}
.menubar {
    height: 24px;
    display: flex;
    align-items: center;
    padding-left: 8px;
    font-size: 10.5px;
    color: #8c8c8c;
    white-space: nowrap;
}
.m1 { width: 63px; letter-spacing: -1.2px; }
.m2 { width: 51px; letter-spacing: 0.4px; }
.m3 { width: 53px; letter-spacing: 0.6px; }
.m4 { width: 63px; letter-spacing: -0.7px; }
.m5 { width: 82px; letter-spacing: -1.3px; }
.m6 { width: 47px; letter-spacing: -0.6px; }
.m7 { width: 63px; letter-spacing: -1.1px; }
.m8 { width: 68px; letter-spacing: -1.2px; }
.m9 { width: 102px; letter-spacing: -1.05px; }
.m10 { letter-spacing: -0.2px; }

/* toolbars */
.toolbar {
    display: flex;
    align-items: center;
    padding-left: 3.500px;
}
.toolbar.top {
    height: 41px;
}
.toolbar.controls {
    height: 40px;
}
.ic {
    width: 20px;
    height: 20px;
    margin: 0 7.800px;
    color: #eee;
}
.ic.small {
    width: 17px;
    height: 17px;
    margin: 0 9.300px;
}
.ic.dim {
    color: #666;
}
.ic.sync {
    margin-left: 26px;
}
.ic.drop {
    margin-left: 15px;
    width: 20px;
}
.sep {
    width: 1px;
    height: 30px;
    margin: 0 6.200px;
    background-color: #3b3b3b;
}
.sep-unit {
    margin: 0 10px 0 7px;
}
.more-btn, .active-btn {
    display: flex;
    align-items: center;
    justify-content: center;
    border: 1px solid #222;
    border-radius: 6px;
    height: 33px;
    width: 33px;
}
.more-btn {
    margin-left: 2px;
}
.active-btn {
    background-color: #2a2a2a;
    margin: 0 2px 0 2px;
}
.ic-sm {
    width: 20px;
    height: 20px;
}
.lbl {
    color: #777;
    font-size: 11px;
    flex-shrink: 0;
}
.lbl-x {
    width: 34px;
    padding-left: 24px;
    margin-left: -6px;
}
.lbl-y {
    width: 18px;
    padding-left: 6px;
}
.lbl-w {
    width: 24px;
    padding-left: 2px;
}
.lbl-h {
    width: 25px;
}
.spin {
    height: 33px;
    display: flex;
    align-items: center;
    flex-shrink: 0;
    border: 1px solid #232323;
    border-radius: 6px;
    color: #a8a8a8;
    font-size: 11px;
}
.spin .val {
    flex: 1;
    padding-left: 6px;
    height: 100%;
    line-height: 30px;
    border-right: 1px solid #2c2c2c;
}
.spin .btn {
    width: 16px;
    height: 100%;
    display: flex;
    align-items: center;
    justify-content: center;
    color: #9a9a9a;
}
.spin .btn.off {
    color: #4a4a4a;
}
.spin .btn svg {
    width: 14px;
    height: 14px;
}
.w106 { width: 106px; }
.w100 { width: 100px; }
.w68 { width: 68px; }
.w84 { width: 84px; }
.w90 { width: 89px; }
.ic-lock {
    width: 20px;
    height: 20px;
    margin: 0 12px 0 11px;
}
.unit {
    width: 57px;
    height: 33px;
    margin-left: 5px;
    display: flex;
    align-items: center;
    justify-content: center;
    gap: 2px;
    border: 1px solid #232323;
    border-radius: 6px;
    color: #777;
}
.unit svg {
    width: 14px;
    height: 14px;
    color: #777;
}

/* main area */
.main {
    height: 622px;
    display: flex;
}
.toolbox {
    width: 33px;
    display: flex;
    flex-direction: column;
    border-right: 1px solid #262626;
    padding-left: 1px;
}
.tool {
    height: 30.800px;
    width: 31px;
    display: flex;
    align-items: center;
    justify-content: center;
    flex-shrink: 0;
}
.tool.active {
    background-color: #2a2a2a;
    border-radius: 6px;
}
.tool svg {
    width: 17px;
    height: 17px;
}
.workspace {
    margin-left: 2px;
    width: 648px;
    display: grid;
    grid-template-columns: 18px 606px 24px;
    grid-template-rows: 18px 585px 19px;
}
.corner {
    display: flex;
    align-items: center;
    justify-content: center;
    background-color: #2a2a2a;
    border-radius: 4px;
}
.corner svg {
    width: 13px;
    height: 14px;
}
.ruler-top text, .ruler-left text {
    font-size: 10px;
    fill: #8f8f8f;
}
.display-btn, .color-btn {
    display: flex;
    align-items: center;
    justify-content: center;
    border-radius: 4px;
    background-color: #2a2a2a;
    margin-left: 4px;
    width: 18px;
}
.display-btn svg, .color-btn svg {
    width: 17px;
    height: 17px;
}
.vscroll {
    background-color: #2f2f2f;
    padding: 140px 0 0 9px;
}
.thumb-v {
    display: block;
    width: 8px;
    height: 234px;
    border-radius: 4px;
    background-color: #5a5a5a;
}
.hscroll {
    grid-column: 1 / 3;
    background-color: #2f2f2f;
    padding: 5px 0 0 197px;
}
.thumb-h {
    display: block;
    width: 158px;
    height: 8px;
    border-radius: 4px;
    background-color: #5a5a5a;
}
.handle {
    width: 13px;
    display: flex;
    flex-direction: column;
    align-items: center;
    justify-content: center;
    gap: 2px;
    padding-right: 1px;
}
.handle i {
    width: 3px;
    height: 3px;
    border-radius: 50%;
    background-color: #ddd;
}

/* dock */
.dock {
    width: 498px;
    height: 613px;
    padding-top: 4px;
    display: flex;
    flex-direction: column;
}
.tabs {
    height: 37px;
    display: flex;
    background-color: #2a2a2a;
    flex-shrink: 0;
}
.tab {
    display: flex;
    align-items: center;
    justify-content: center;
}
.t-fill {
    width: 70px;
}
.t-rest {
    width: 62px;
}
.tab.active {
    width: 164px;
    background-color: #333;
    border-bottom: 4px solid #17528f;
    padding-top: 3px;
    font-size: 10.5px;
    letter-spacing: -1.2px;
    color: #999;
}
.tab.active + .t-rest {
    margin-left: 3px;
}
.ic-tab {
    width: 18px;
    height: 18px;
}
.tab.active .ic-tab {
    width: 15px;
    height: 15px;
    margin-right: 2px;
}
.tab-x {
    width: 9px;
    height: 9px;
    margin-left: 6px;
}
.tab-menu {
    margin-left: auto;
    margin-right: 2px;
    width: 27px;
    display: flex;
    align-items: center;
    justify-content: center;
    margin-top: 3px;
    margin-bottom: 3px;
    background-color: #2e2e2e;
    color: #888;
}
.tab-menu svg {
    width: 18px;
    height: 18px;
}
.dock-bar {
    height: 36px;
    display: flex;
    align-items: center;
    flex-shrink: 0;
    padding-left: 10px;
}
.add-layer {
    width: 18px;
    height: 18px;
    margin-right: 143px;
}
.db-ic {
    width: 18px;
    height: 18px;
    margin: 0 8.500px;
    color: #eee;
}
.db-ic.gear {
    margin: 0;
    width: 17px;
    height: 17px;
    margin-left: 6px;
}
.dock-bar .sep {
    height: 28px;
    margin: 0 5px;
}
.search {
    margin-left: 14px;
    width: 173px;
    height: 30px;
    border: 1px solid #232323;
    border-radius: 6px;
    display: flex;
    align-items: center;
    padding-left: 4px;
}
.search svg {
    width: 17px;
    height: 17px;
}
.tree {
    flex: 1;
    background-color: #2d2d2d;
    border: 1px solid #1c1c1c;
    color: #a9b8c8;
    font-size: 11px;
}
.row {
    height: 23px;
    display: flex;
    align-items: center;
    position: relative;
}
.row b {
    position: absolute;
    right: 2px;
    top: 1px;
    bottom: 1px;
    width: 5px;
    background-color: #3c7be0;
}
.layer {
    background-color: #254268;
}
.child {
    background-color: #175092;
    padding-left: 30px;
}
.expander {
    width: 0;
    height: 0;
    margin: 0 9px 0 4px;
    border-left: 3.500px solid transparent;
    border-right: 3.500px solid transparent;
    border-top: 5px solid #777;
}
.row-ic {
    width: 15px;
    height: 15px;
    margin-right: 6px;
}

/* palette */
.palette {
    height: 33px;
    display: flex;
    align-items: flex-end;
    padding-left: 2px;
    position: relative;
}
.nofill {
    width: 32px;
    height: 32px;
}
.swatches {
    display: flex;
    height: 17px;
    margin-bottom: 1px;
    width: 1078px;
}
.sw {
    width: 16.333px;
    flex-shrink: 0;
    height: 17px;
    position: relative;
    border-left: 1px solid rgba(60, 60, 60, 0.5);
}
.sw.dot::after {
    content: "";
    position: absolute;
    left: 6px;
    top: 6px;
    width: 4px;
    height: 4px;
    border-radius: 50%;
    background-color: #ccc;
}
.pal-ch {
    width: 18px;
    height: 18px;
    color: #eee;
    align-self: center;
    margin-top: -2px;
    margin-left: 11px;
}
.pal-ch.up {
    margin-left: 13px;
}
.pal-menu {
    position: absolute;
    left: 1180px;
    top: 9px;
    width: 18px;
    height: 30px;
    border: 1px solid #222;
    border-radius: 5px;
    display: flex;
    flex-direction: column;
    justify-content: center;
    align-items: center;
    gap: 2px;
    background-color: #333;
    z-index: 1;
}
.pal-menu i {
    width: 13px;
    height: 2px;
    background-color: #eee;
}

/* status bar */
.statusbar {
    height: 35px;
    display: flex;
    align-items: center;
    color: #999;
}
.fs {
    width: 110px;
    display: grid;
    grid-template-columns: 62px 48px;
    grid-template-rows: 16px 16px;
    row-gap: 1px;
    align-items: center;
    font-size: 10.5px;
    letter-spacing: -0.7px;
    color: #8a8a8a;
    text-align: right;
}
.fs-label {
    padding-right: 2px;
    white-space: nowrap;
}
.fs-fill {
    display: flex;
    height: 16px;
}
.checker {
    width: 25px;
    background: repeating-conic-gradient(#7a7a7a 0 25%, #8e8e8e 0 50%) 0 0 / 12px 12px;
}
.black {
    flex: 1;
    background-color: #000;
}
.fs-stroke {
    height: 16px;
    background-color: #e6e9ff;
    border-radius: 2px;
}
.stroke-w {
    width: 43px;
    padding: 12px 0 0 10px;
    color: #777;
    font-size: 10.5px;
}
.lbl-o {
    width: 14px;
}
.statusbar .w68 {
    margin-right: 17px;
}
.statusbar .spin {
    height: 32px;
}
.statusbar .spin .btn {
    width: 17px;
}
.layer-bar {
    width: 2px;
    height: 17px;
    background-color: #3c7be0;
    margin-right: 7px;
}
.layer-name {
    width: 54px;
    color: #777;
}
.st-eye {
    width: 18px;
    height: 18px;
}
.st-lock {
    width: 18px;
    height: 18px;
    margin-left: 17px;
}
.msg {
    width: 530px;
    margin: 0 0 0 16px;
    font-size: 10.5px;
    line-height: 16px;
    letter-spacing: -0.72px;
    white-space: nowrap;
}
.coords {
    width: 72px;
    padding-left: 10px;
    display: grid;
    grid-template-columns: 18px 33px;
    line-height: 16px;
    border-left: 1px solid #3b3b3b;
}
.num {
    text-align: right;
    color: #888;
}
.lbl-z {
    width: 9px;
}
.statusbar .w84 {
    margin-left: 1px;
}
.statusbar .w84 .btn {
    width: 20px;
}
.lbl-r {
    width: 19px;
    margin-left: 1px;
    padding-left: 9px;
}
.statusbar .w90 .btn {
    width: 18px;
}
```
